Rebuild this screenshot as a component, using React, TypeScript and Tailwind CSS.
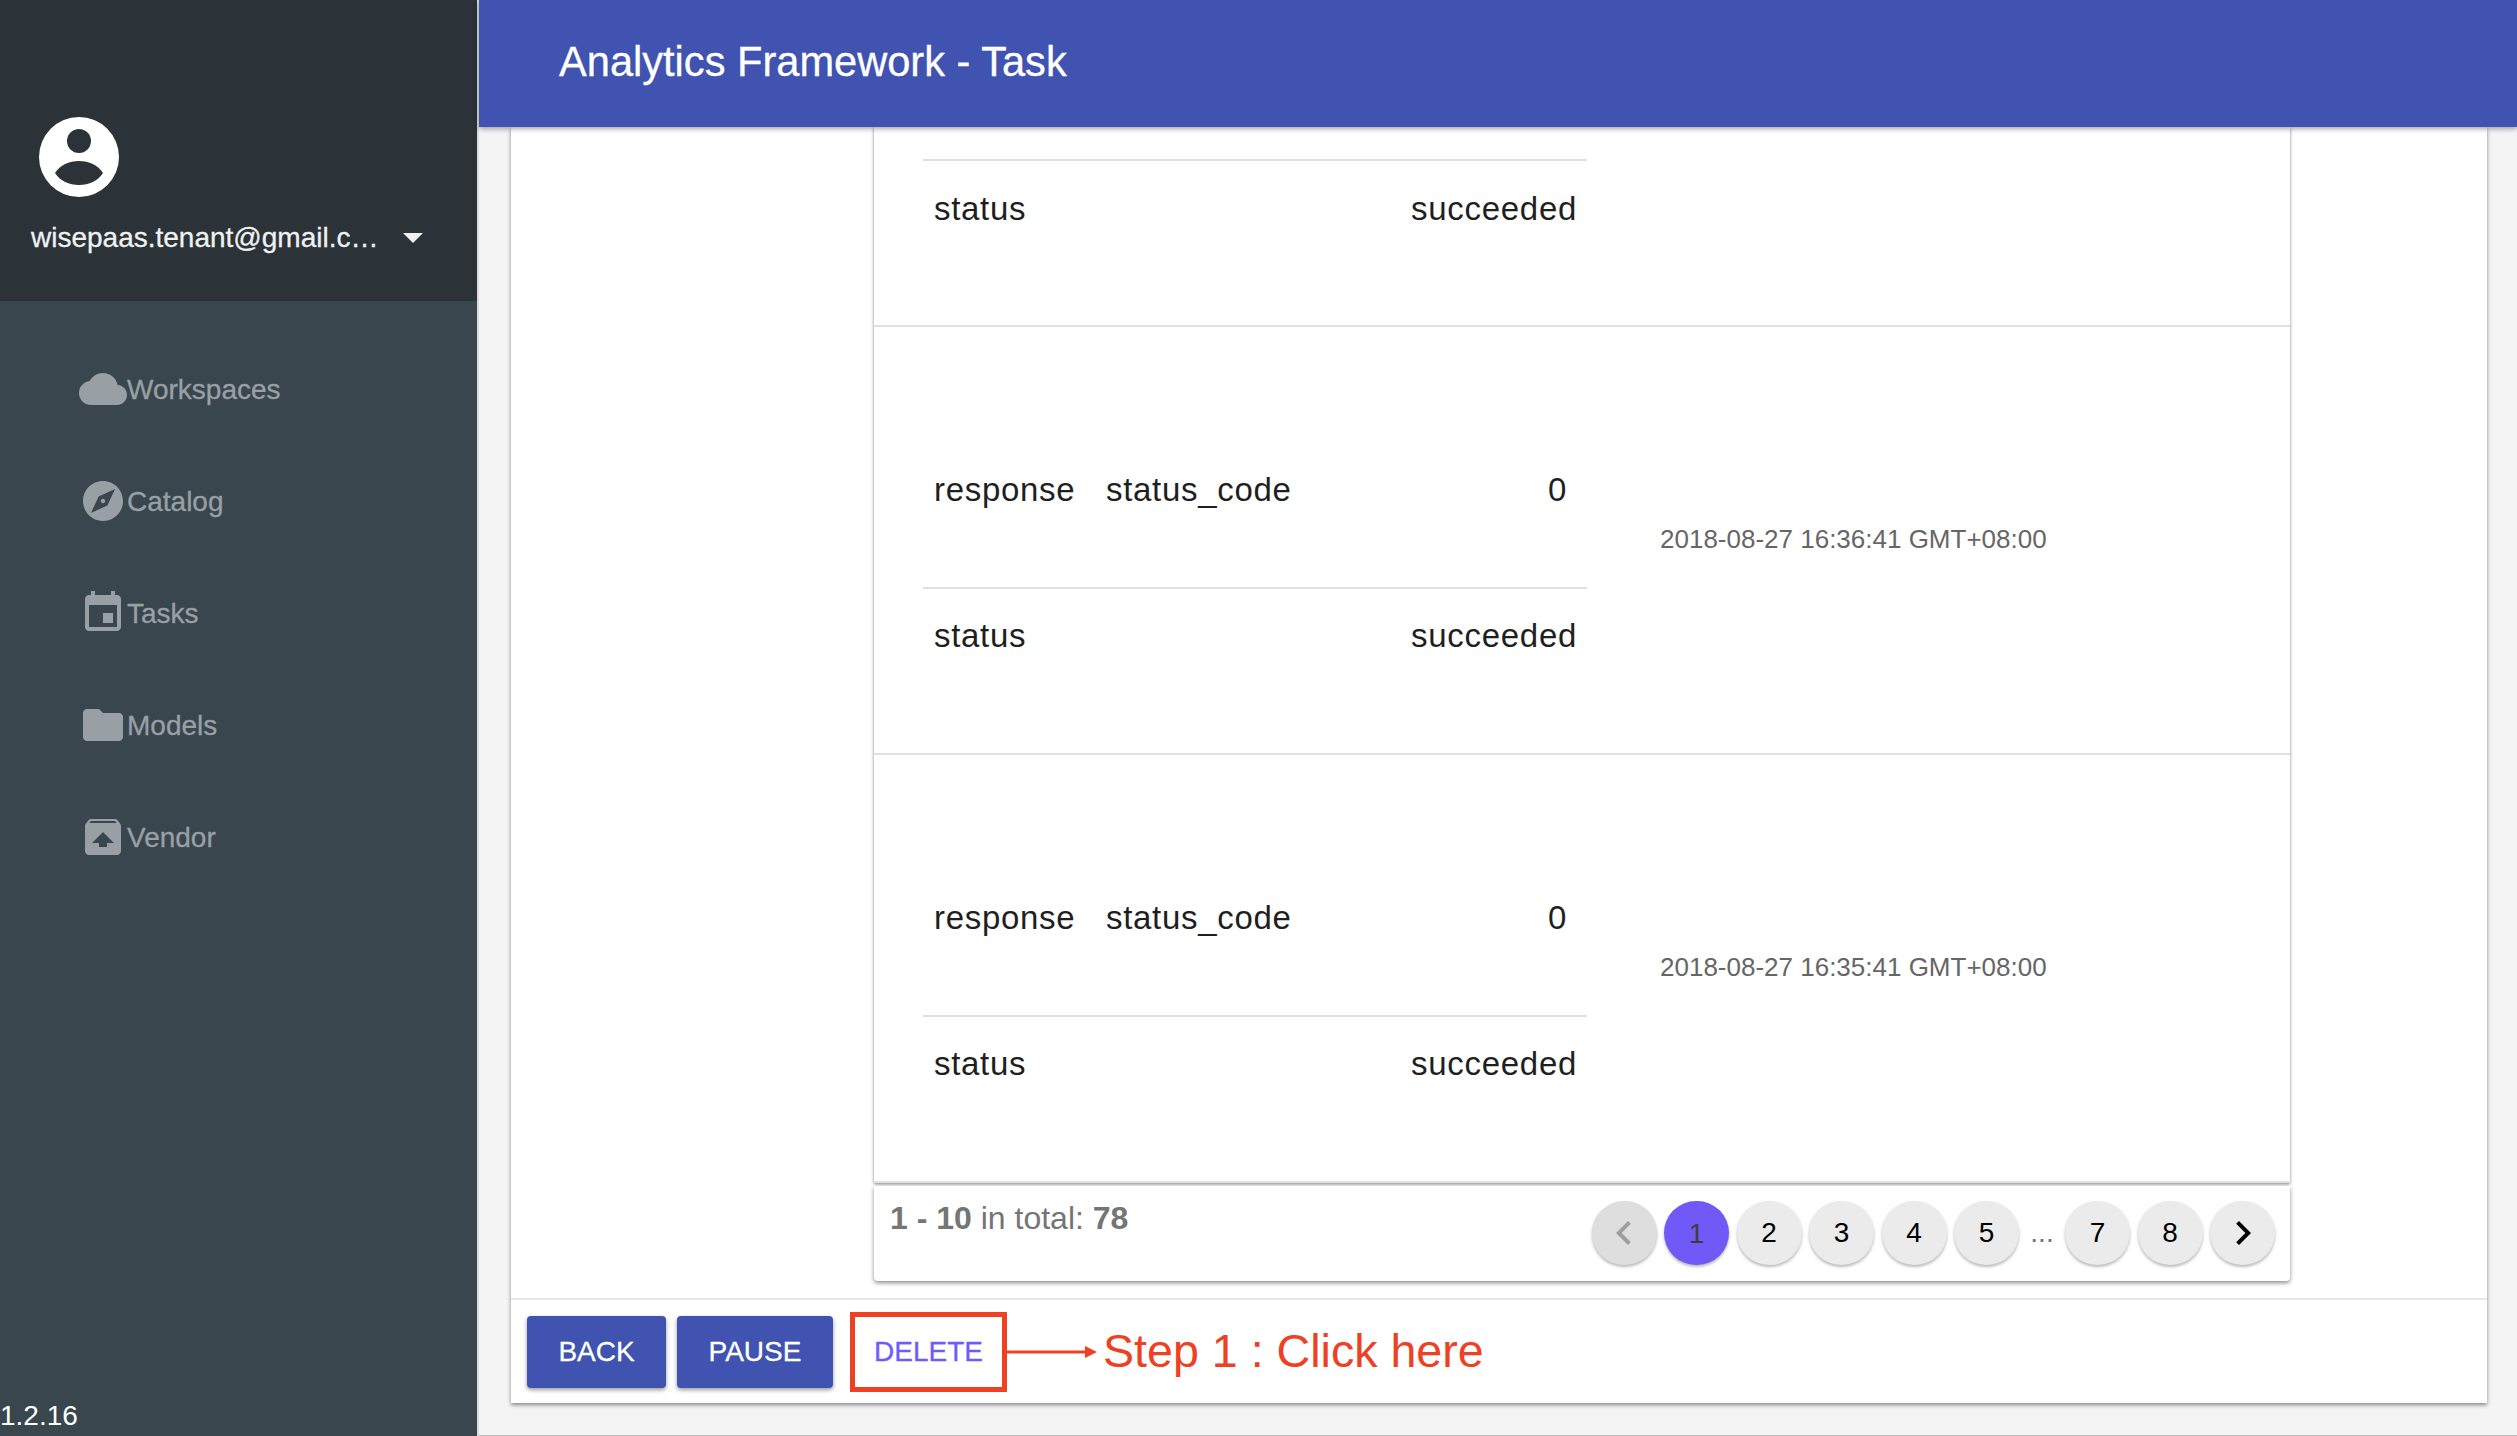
import React from 'react';

const navItems = [
  { label: 'Workspaces', d: 'M19.35 10.04C18.67 6.59 15.64 4 12 4 9.11 4 6.6 5.64 5.35 8.04 2.34 8.36 0 10.91 0 14c0 3.31 2.69 6 6 6h13c2.76 0 5-2.24 5-5 0-2.64-2.05-4.78-4.65-4.96z' },
  { label: 'Catalog', d: 'M12 10.9c-.61 0-1.1.49-1.1 1.1s.49 1.1 1.1 1.1c.61 0 1.1-.49 1.1-1.1s-.49-1.1-1.1-1.1zM12 2C6.48 2 2 6.48 2 12s4.48 10 10 10 10-4.48 10-10S17.52 2 12 2zm2.19 12.19L6 18l3.81-8.19L18 6l-3.81 8.19z' },
  { label: 'Tasks', d: 'M17 12h-5v5h5v-5zM16 1v2H8V1H6v2H5c-1.11 0-1.99.9-1.99 2L3 19c0 1.1.89 2 2 2h14c1.1 0 2-.9 2-2V5c0-1.1-.9-2-2-2h-1V1h-2zm3 18H5V8h14v11z' },
  { label: 'Models', d: 'M10 4H4c-1.1 0-1.99.9-1.99 2L2 18c0 1.1.9 2 2 2h16c1.1 0 2-.9 2-2V8c0-1.1-.9-2-2-2h-8l-2-2z' },
  { label: 'Vendor', d: 'M20.55 5.22l-1.39-1.68C18.88 3.21 18.47 3 18 3H6c-.47 0-.88.21-1.15.55L3.46 5.22C3.17 5.57 3 6.01 3 6.5V19c0 1.1.89 2 2 2h14c1.1 0 2-.9 2-2V6.5c0-.49-.17-.93-.45-1.28zM12 9.5l5.5 5.5H14v2h-4v-2H6.5L12 9.5zM5.12 5l.82-1h12l.93 1H5.12z' },
];

const StatusRow = () => (
  <div className="flex h-[97px] items-center justify-between border-t-2 border-[#e0e0e0] pl-[11px] pr-[10px]">
    <span>status</span>
    <span>succeeded</span>
  </div>
);

const ResultRow = ({ date }: { date: string }) => (
  <div className="flex h-[428px] items-center border-b-2 border-[#e0e0e0] pl-[49px]">
    <div className="w-[664px] pb-[6px]">
      <div className="flex h-[196px] items-center pl-[11px] pr-[20px] pt-[3px]">
        <span className="w-[172px]">response</span>
        <span className="flex-1">status_code</span>
        <span>0</span>
      </div>
      <StatusRow />
    </div>
    <div className="ml-[73px] pb-[2px] text-[26px] tracking-normal text-[#666666]">{date}</div>
  </div>
);

const PageButton = ({ children, active, muted }: { children: React.ReactNode; active?: boolean; muted?: boolean }) => (
  <button
    className={`flex h-[64px] w-[65px] items-center justify-center rounded-full text-[28px] shadow-[0_2px_3px_rgba(0,0,0,0.28)] ${
      active ? 'bg-[#7059f6] pt-[2px] text-[#3d3d3d]' : muted ? 'bg-[#dedede] text-[#9e9e9e]' : 'bg-[#ebebeb] text-black'
    }`}
  >
    {children}
  </button>
);

export default function App() {
  return (
    <div className="flex h-[1436px] w-[2517px] overflow-hidden bg-[#f4f4f4] font-['Liberation_Sans',Arial,sans-serif]">
      {/* Sidebar */}
      <aside className="flex h-full w-[479px] shrink-0 flex-col border-r-2 border-[#dcdcdc] bg-[#39464e]">
        <div className="h-[301px] bg-[#2b3238] pt-[117px]">
          <svg className="ml-[39px] block h-[80px] w-[80px]" viewBox="0 0 80 80">
            <circle cx="40" cy="40" r="40" fill="#ffffff" />
            <circle cx="40" cy="24" r="12" fill="#2b3238" />
            <path d="M16 56C21 48 30 44 40 44s19 4 24 12c-5 8-14 12-24 12S21 64 16 56z" fill="#2b3238" />
          </svg>
          <div className="mt-[23px] flex items-center pl-[31px] text-[28px] leading-[36px] text-[#f0f1f2] [-webkit-text-stroke:0.3px]">
            <span className="w-[346px] whitespace-nowrap">wisepaas.tenant@gmail.c…</span>
            <span className="ml-[26px] h-0 w-0 border-x-[10px] border-t-[10px] border-x-transparent border-t-[#f0f1f2]" />
          </div>
        </div>
        <nav className="flex-1 pt-[32px]">
          {navItems.map((item) => (
            <div key={item.label} className="flex h-[112px] items-center pl-[79px] text-[28px] text-[#98a0a5] [-webkit-text-stroke:0.3px]">
              <svg className="h-[48px] w-[48px] shrink-0" viewBox="0 0 24 24" fill="#98a0a5">
                <path d={item.d} />
              </svg>
              <span className="pt-[2px]">{item.label}</span>
            </div>
          ))}
        </nav>
        <div className="h-[38px] text-[28px] leading-[36px] text-white">1.2.16</div>
      </aside>

      {/* Main */}
      <main className="flex min-w-0 flex-1 flex-col border-b border-[#bdbdbd]">
        <header className="relative z-10 flex h-[127px] shrink-0 items-center bg-[#4053b0] pb-[2px] pl-[80px] text-[41.6px] text-white shadow-[0_2px_5px_rgba(0,0,0,0.35)] [-webkit-text-stroke:0.3px]">
          Analytics Framework - Task
        </header>
        <div className="ml-[32px] mr-[30px] flex h-[1276px] flex-col bg-white shadow-[0_2px_4px_rgba(0,0,0,0.45)]">
          <div className="h-[1171px] shrink-0 pl-[363px] pr-[197px] text-[33px] tracking-[0.7px] text-[#1f1f1f]">
            <div className="bg-white shadow-[0_1px_3px_rgba(0,0,0,0.5)]">
              <div className="h-[200px] border-b-2 border-[#e0e0e0] pl-[49px] pt-[32px]">
                <div className="w-[664px]">
                  <StatusRow />
                </div>
              </div>
              <ResultRow date="2018-08-27 16:36:41 GMT+08:00" />
              <ResultRow date="2018-08-27 16:35:41 GMT+08:00" />
            </div>
            <div className="mt-[3px] flex h-[95px] items-start justify-between rounded-b-[4px] bg-white pl-[16px] pr-[15px] pt-[15px] tracking-normal shadow-[0_2px_4px_rgba(0,0,0,0.45)]">
              <div className="text-[32px] leading-[34px] text-[#757575]">
                <b>1 - 10</b> in total: <b>78</b>
              </div>
              <div className="flex items-center gap-[7.5px]">
                <PageButton muted>
                  <svg className="h-[48px] w-[48px]" viewBox="0 0 24 24" fill="#9e9e9e">
                    <path d="M15.41 7.41L14 6l-6 6 6 6 1.41-1.41L10.83 12z" />
                  </svg>
                </PageButton>
                <PageButton active>1</PageButton>
                <PageButton>2</PageButton>
                <PageButton>3</PageButton>
                <PageButton>4</PageButton>
                <PageButton>5</PageButton>
                <span className="w-[31px] text-center text-[28px] text-[#757575]">...</span>
                <PageButton>7</PageButton>
                <PageButton>8</PageButton>
                <PageButton>
                  <svg className="h-[48px] w-[48px]" viewBox="0 0 24 24" fill="#000000">
                    <path d="M10 6L8.59 7.41 13.17 12l-4.58 4.59L10 18l6-6z" />
                  </svg>
                </PageButton>
              </div>
            </div>
          </div>

          {/* Actions */}
          <div className="flex flex-1 items-center border-t-2 border-[#e8e8e8] pl-[16px] text-[28px] [-webkit-text-stroke:0.3px]">
            <button className="h-[72px] w-[139px] rounded-[4px] bg-[#4053b0] text-white shadow-[0_2px_4px_rgba(0,0,0,0.4)]">BACK</button>
            <button className="ml-[11px] h-[72px] w-[156px] rounded-[4px] bg-[#4053b0] text-white shadow-[0_2px_4px_rgba(0,0,0,0.4)]">PAUSE</button>
            <button className="ml-[17px] h-[80px] w-[157px] border-[5px] border-[#ee4023] text-[#6f5cf7]">DELETE</button>
            <svg className="h-[16px] w-[92px] shrink-0" viewBox="0 0 92 16">
              <path d="M0 8H80" stroke="#ee4023" strokeWidth="3" />
              <path d="M78 2L90 8L78 14z" fill="#ee4023" />
            </svg>
            <span className="ml-[4px] text-[46.6px] text-[#ee4023] [-webkit-text-stroke:0px]">Step 1 : Click here</span>
          </div>
        </div>
      </main>
    </div>
  );
}
